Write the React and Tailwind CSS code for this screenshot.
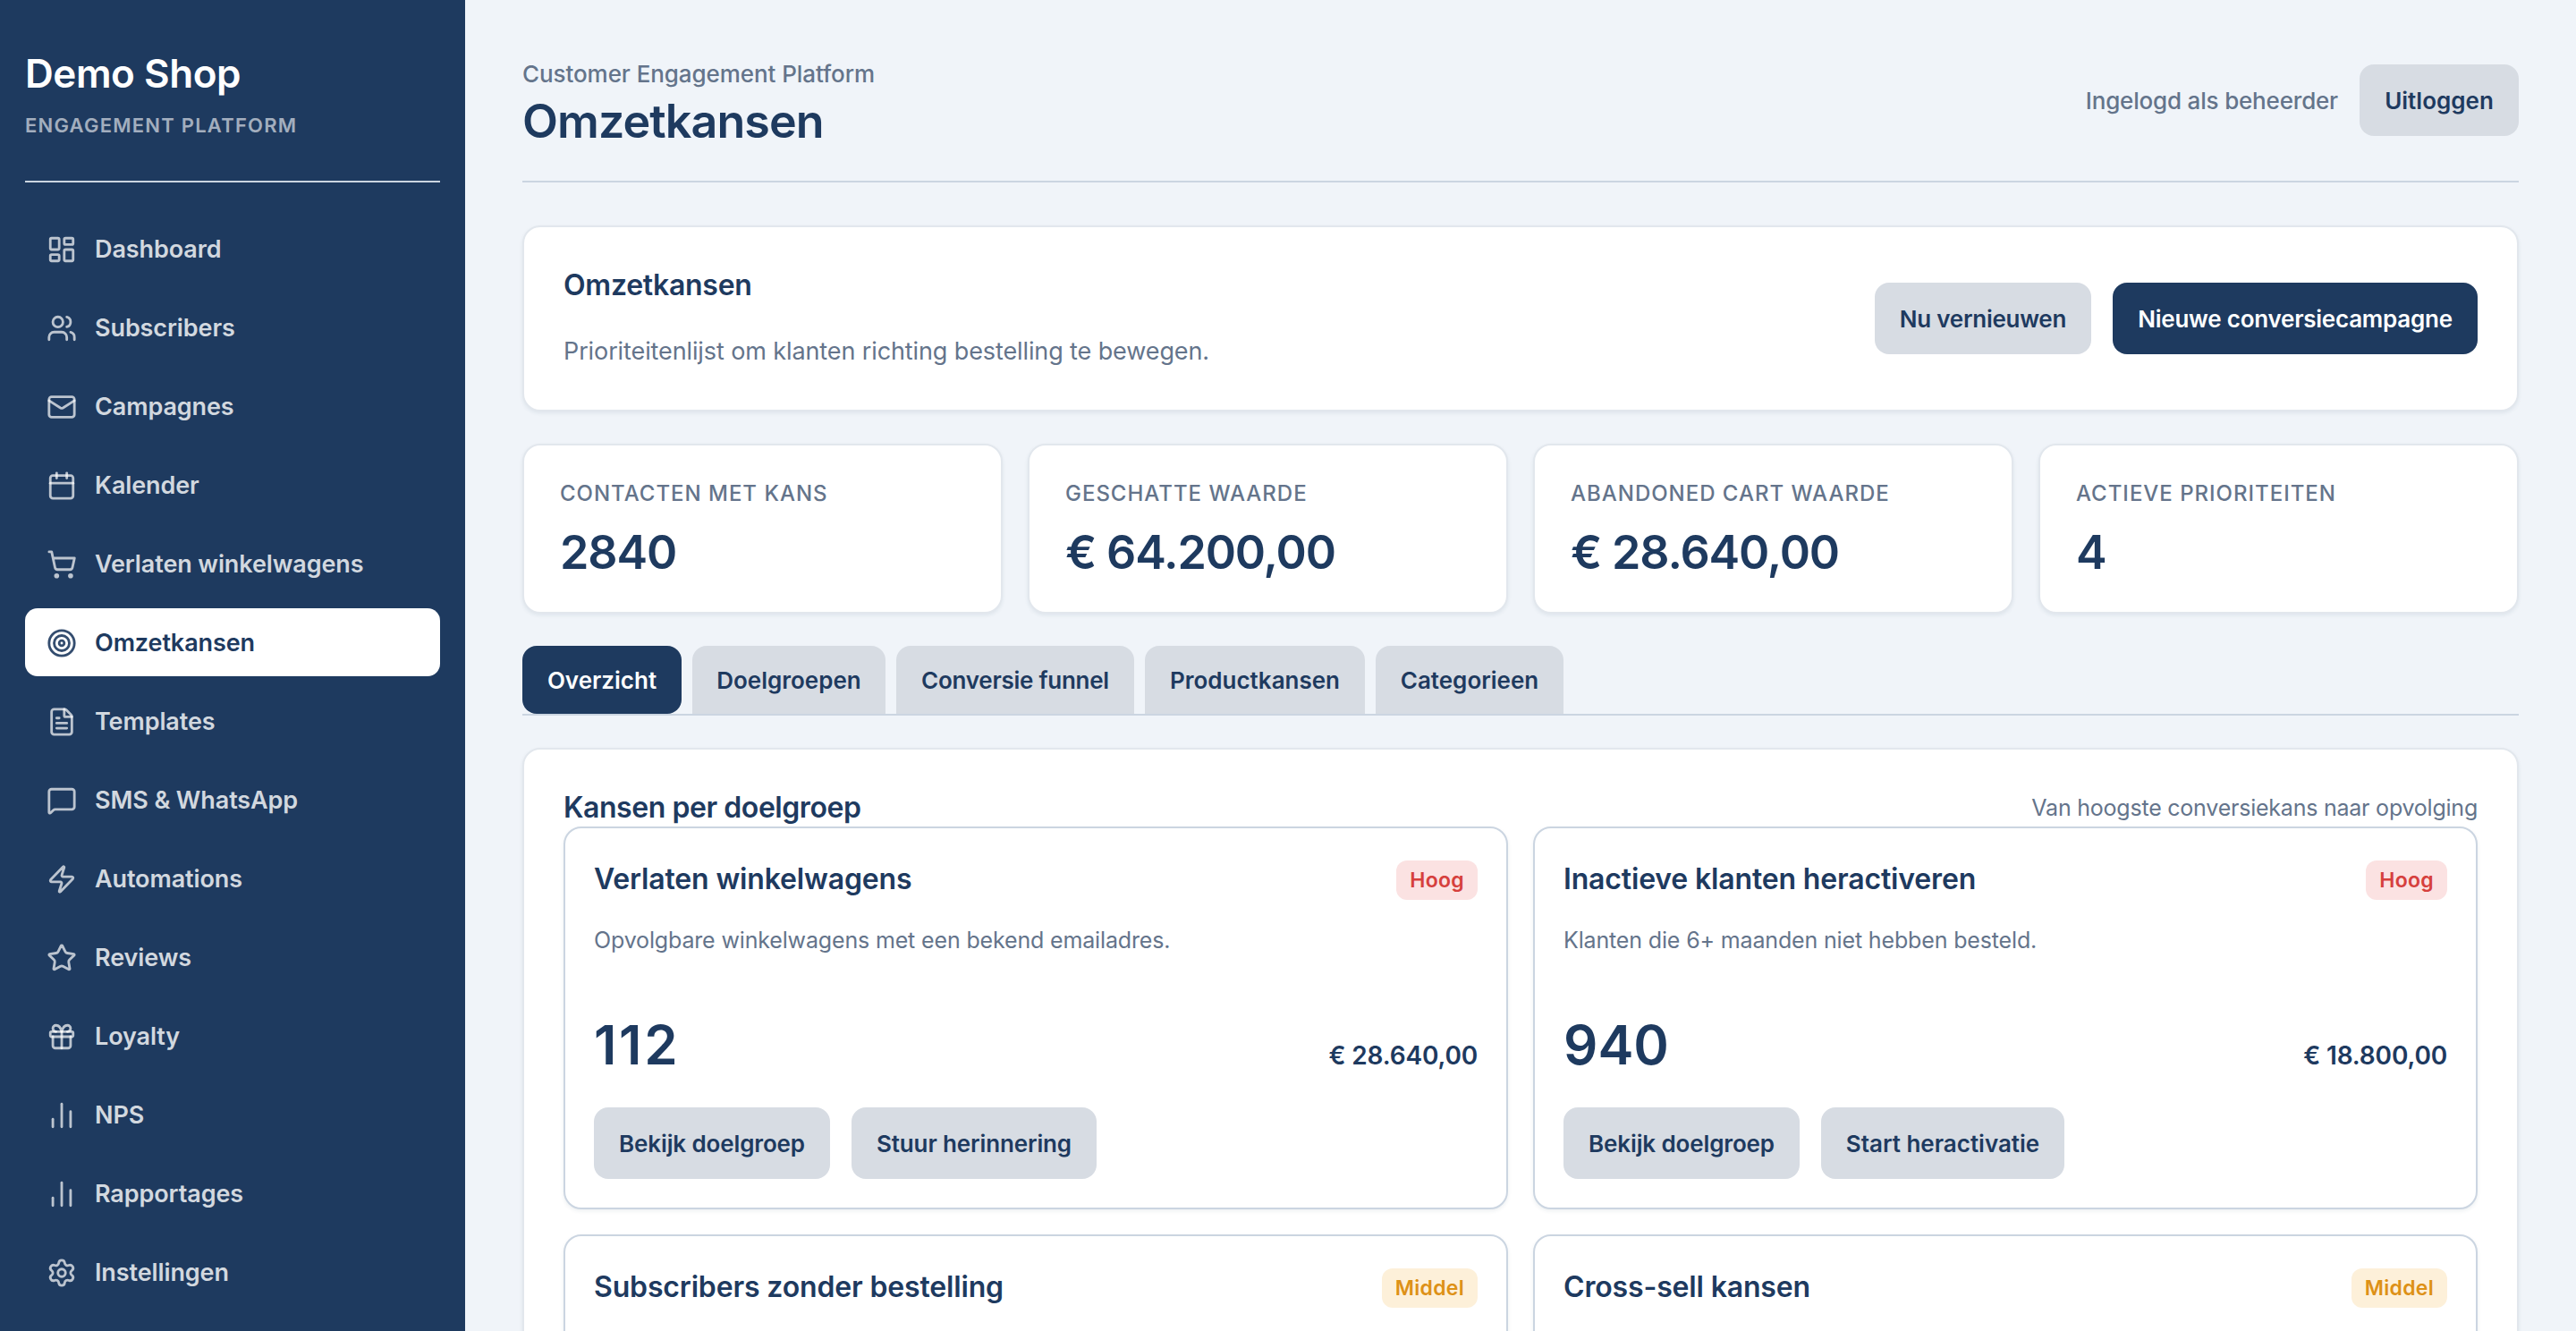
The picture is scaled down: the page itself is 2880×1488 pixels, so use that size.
import {
  Calendar,
  ChartNoAxesColumn,
  FileText,
  Gift,
  LayoutDashboard,
  Mail,
  MessageSquare,
  Settings,
  ShoppingCart,
  Star,
  Target,
  Users,
  Zap,
} from "lucide-react";
import clsx from "clsx";

const NAV = [
  { label: "Dashboard", icon: LayoutDashboard },
  { label: "Subscribers", icon: Users },
  { label: "Campagnes", icon: Mail },
  { label: "Kalender", icon: Calendar },
  { label: "Verlaten winkelwagens", icon: ShoppingCart },
  { label: "Omzetkansen", icon: Target, active: true },
  { label: "Templates", icon: FileText },
  { label: "SMS & WhatsApp", icon: MessageSquare },
  { label: "Automations", icon: Zap },
  { label: "Reviews", icon: Star },
  { label: "Loyalty", icon: Gift },
  { label: "NPS", icon: ChartNoAxesColumn },
  { label: "Rapportages", icon: ChartNoAxesColumn },
  { label: "Instellingen", icon: Settings },
];

const STATS = [
  { label: "Contacten met kans", value: "2840" },
  { label: "Geschatte waarde", value: "€ 64.200,00" },
  { label: "Abandoned cart waarde", value: "€ 28.640,00" },
  { label: "Actieve prioriteiten", value: "4" },
];

const TABS = [
  { label: "Overzicht", width: "w-[178px]", active: true },
  { label: "Doelgroepen", width: "w-[216px]" },
  { label: "Conversie funnel", width: "w-[266px]", tracking: "tracking-[-0.01em]" },
  { label: "Productkansen", width: "w-[246px]" },
  { label: "Categorieen", width: "w-[210px]" },
];

const CARDS = [
  {
    title: "Verlaten winkelwagens",
    priority: "Hoog",
    text: "Opvolgbare winkelwagens met een bekend emailadres.",
    count: "112",
    countTracking: "tracking-[0.045em]",
    amount: "€ 28.640,00",
    actions: [
      { label: "Bekijk doelgroep", width: "w-[264px]", tracking: "tracking-[-0.005em]" },
      { label: "Stuur herinnering", width: "w-[274px]", tracking: "tracking-[-0.005em]" },
    ],
  },
  {
    title: "Inactieve klanten heractiveren",
    priority: "Hoog",
    text: "Klanten die 6+ maanden niet hebben besteld.",
    count: "940",
    amount: "€ 18.800,00",
    actions: [
      { label: "Bekijk doelgroep", width: "w-[264px]", tracking: "tracking-[-0.005em]" },
      { label: "Start heractivatie", width: "w-[272px]" },
    ],
  },
  {
    title: "Subscribers zonder bestelling",
    priority: "Middel",
  },
  {
    title: "Cross-sell kansen",
    priority: "Middel",
  },
];

function Button({ children, primary, className }) {
  return (
    <button
      className={clsx(
        "flex h-20 shrink-0 items-center justify-center rounded-2xl text-[26px] font-semibold whitespace-nowrap",
        primary ? "bg-[#1e3a5f] text-white" : "bg-[#d7dce3] text-[#1e3a5f]",
        className,
      )}
    >
      {children}
    </button>
  );
}

function NavItem({ label, icon: Icon, active }) {
  return (
    <a
      className={clsx(
        "flex h-[76px] items-center gap-5 rounded-[14px] pt-0.5 pl-6 text-[27px] font-semibold tracking-[-0.004em] whitespace-nowrap",
        active ? "bg-white text-[#1e3a5f]" : "text-[#d2d8df]",
      )}
    >
      <Icon
        size={34}
        strokeWidth={2}
        className={clsx("shrink-0", active ? "text-[#1e3a5f]/90" : "text-white/70")}
      />
      {label}
    </a>
  );
}

function Sidebar() {
  return (
    <aside className="w-[520px] shrink-0 bg-[#1e3a5f] px-7 pt-14">
      <div className="h-[148px] border-b-2 border-[#cbd5e1]">
        <div className="text-[44px] leading-[52px] font-semibold tracking-[-0.01em] text-white">Demo Shop</div>
        <div className="mt-[17px] text-[22px] leading-[30px] font-semibold tracking-[0.056em] text-white/60 uppercase">
          Engagement platform
        </div>
      </div>
      <nav className="mt-9 flex flex-col gap-3">
        {NAV.map((item) => (
          <NavItem key={item.label} {...item} />
        ))}
      </nav>
    </aside>
  );
}

function Panel({ children, className }) {
  return (
    <section
      className={clsx(
        "rounded-[20px] border-2 border-[#e2e7ed] bg-white shadow-[0_2px_4px_rgba(30,58,95,0.08)]",
        className,
      )}
    >
      {children}
    </section>
  );
}

function Badge({ level }) {
  return (
    <span
      className={clsx(
        "flex h-11 items-center rounded-xl px-[15px] text-[23px] font-semibold tracking-[0.012em]",
        level === "Hoog" ? "bg-[#fbe2e2] text-[#d6403d]" : "bg-[#fdf0d9] text-[#dd9117]",
      )}
    >
      {level}
    </span>
  );
}

function OpportunityCard({ title, priority, text, count, countTracking, amount, actions = [] }) {
  return (
    <article className="h-[428px] rounded-[20px] border-2 border-[#cbd5e1] bg-white px-8 pt-9 pb-8 shadow-[0_2px_4px_rgba(30,58,95,0.08)]">
      <div className="flex h-11 justify-between">
        <h3 className="text-[32px] leading-[42px] font-semibold tracking-[-0.005em]">{title}</h3>
        <Badge level={priority} />
      </div>
      <p className="mt-[25px] text-[25px] leading-10 tracking-[-0.006em] text-[#64748b]">{text}</p>
      <div className="mt-[61px] flex items-baseline justify-between font-semibold">
        <span className={clsx("text-[60px] leading-[72px]", countTracking)}>{count}</span>
        <span className="text-[28px] tracking-[-0.006em]">{amount}</span>
      </div>
      <div className="mt-[34px] flex gap-6">
        {actions.map((action) => (
          <Button key={action.label} className={clsx(action.width, action.tracking)}>
            {action.label}
          </Button>
        ))}
      </div>
    </article>
  );
}

export default function App() {
  return (
    <div className="flex h-[1488px] w-[2880px] overflow-hidden bg-[#f0f4f9] font-['Inter',sans-serif] text-[#1e3a5f]">
      <Sidebar />
      <main className="flex-1 px-16 pt-14">
        <header className="flex h-[148px] items-start justify-between border-b-2 border-[#cbd5e1]">
          <div className="pt-1.5">
            <div className="text-[26px] leading-[41px] font-medium tracking-[-0.003em] text-[#64748b]">
              Customer Engagement Platform
            </div>
            <h1 className="text-[52px] leading-[66px] font-semibold tracking-[-0.018em]">Omzetkansen</h1>
          </div>
          <div className="mt-4 flex items-center gap-6">
            <span className="text-[26px] font-medium tracking-[-0.007em] text-[#64748b]">Ingelogd als beheerder</span>
            <Button className="w-[178px]">Uitloggen</Button>
          </div>
        </header>

        <Panel className="mt-12 flex items-center justify-between p-11">
          <div>
            <h2 className="text-[32px] leading-[42px] font-semibold tracking-[-0.008em]">Omzetkansen</h2>
            <p className="mt-[31px] text-[27px] leading-[43px] tracking-[-0.004em] text-[#64748b]">
              Prioriteitenlijst om klanten richting bestelling te bewegen.
            </p>
          </div>
          <div className="flex gap-6">
            <Button className="w-[242px] tracking-[-0.01em]">Nu vernieuwen</Button>
            <Button primary className="w-[408px] tracking-[-0.009em]">
              Nieuwe conversiecampagne
            </Button>
          </div>
        </Panel>

        <div className="mt-9 grid grid-cols-4 gap-7">
          {STATS.map((stat) => (
            <Panel key={stat.label} className="h-[190px] px-10 pt-[39px]">
              <div className="text-[24px] leading-[30px] font-medium tracking-[0.041em] text-[#64748b] uppercase">
                {stat.label}
              </div>
              <div className="mt-5 text-[52px] leading-[62px] font-semibold tracking-[-0.022em]">{stat.value}</div>
            </Panel>
          ))}
        </div>

        <div className="mt-9 flex gap-3 border-b-2 border-[#cbd5e1]">
          {TABS.map((tab) => (
            <button
              key={tab.label}
              className={clsx(
                "h-[76px] text-[26px] font-semibold whitespace-nowrap",
                tab.width,
                tab.tracking,
                tab.active ? "rounded-2xl bg-[#1e3a5f] text-white" : "rounded-t-2xl bg-[#d7dce3]",
              )}
            >
              {tab.label}
            </button>
          ))}
        </div>

        <Panel className="mt-9 p-11">
          <div className="flex h-[42px] items-center justify-between">
            <h2 className="text-[32px] font-semibold tracking-[-0.014em]">Kansen per doelgroep</h2>
            <span className="pt-0.5 text-[25px] tracking-[-0.009em] text-[#64748b]">
              Van hoogste conversiekans naar opvolging
            </span>
          </div>
          <div className="grid grid-cols-2 gap-7">
            {CARDS.map((card) => (
              <OpportunityCard key={card.title} {...card} />
            ))}
          </div>
        </Panel>
      </main>
    </div>
  );
}
